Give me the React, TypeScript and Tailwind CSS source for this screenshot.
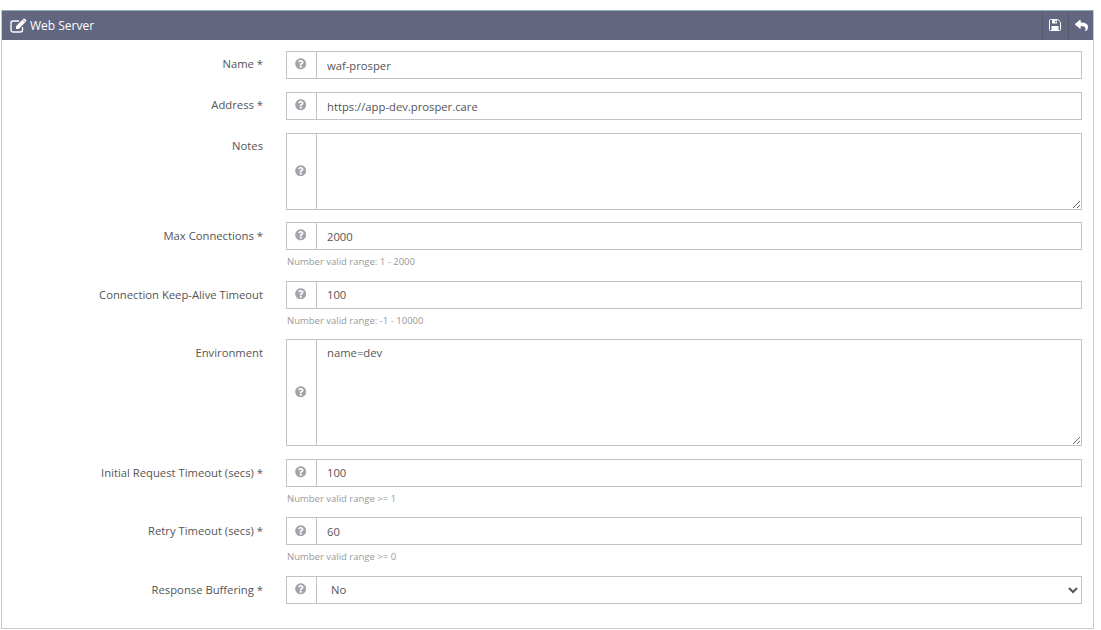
import type { ReactNode } from 'react';
import { FaQuestionCircle, FaReply } from 'react-icons/fa';

interface RowProps {
  label: string;
  help?: string;
  tight?: boolean;
  children: ReactNode;
}

function EditIcon() {
  return (
    <svg width="17" height="15" viewBox="0 0 17 15" fill="none">
      <path d="M12.5 9v3a2 2 0 0 1-2 2H3a2 2 0 0 1-2-2V5a2 2 0 0 1 2-2h6" stroke="currentColor" strokeWidth="1.4" />
      <path d="M6 8.2 12.6 1.6l2.7 2.7-6.6 6.6H6z" fill="currentColor" />
      <path d="M13.4.8c.4-.4 1-.4 1.4 0l1.3 1.3c.4.4.4 1 0 1.4l-.5.5-2.7-2.7z" fill="currentColor" />
    </svg>
  );
}

function SaveIcon() {
  return (
    <svg width="12" height="12" viewBox="0 0 12 12" fill="none">
      <path d="M.5 1.5a1 1 0 0 1 1-1h7.3l2.7 2.7v7.3a1 1 0 0 1-1 1h-9a1 1 0 0 1-1-1z" stroke="currentColor" />
      <path d="M3 1h5v3.5H3z" fill="currentColor" />
      <path d="M6.3 1.5h1v2h-1z" fill="#62667f" />
      <path d="M2.5 7h7v4h-7z" fill="currentColor" />
    </svg>
  );
}

function Row({ label, help, tight, children }: RowProps) {
  return (
    <div className="flex">
      <label className={`w-[261px] shrink-0 ${tight ? 'pt-[5px]' : 'pt-[6px]'} text-right text-[11.25px] leading-[16px] text-[#555]`}>
        {label}
      </label>
      <div className="ml-[23px] w-[796px]">
        <div className="flex">
          <span className="flex w-[30px] shrink-0 items-center justify-center border border-r-0 border-[#c2c2c8] pr-[2px] pb-[2px] text-[#a3a3ab]">
            <FaQuestionCircle size={11.5} />
          </span>
          {children}
        </div>
        {help && <p className="mt-[5px] h-[13px] pl-px text-[9.5px] leading-[13px] text-[#999]">{help}</p>}
      </div>
    </div>
  );
}

const inputClass = 'h-[28px] w-full border border-[#c2c2c8] bg-white px-[10px] text-[11.25px] text-[#555] outline-none';

export default function App() {
  return (
    <div className="h-[630px] w-[1101px] overflow-hidden bg-white pt-[10px] pl-px font-['Open_Sans',sans-serif]">
      <div className="h-[619px] w-[1093px] border-r border-b border-l border-[#c9c9cf]">
        <div className="flex h-[29.5px] items-center justify-between border-t border-[#8fb0b5] bg-[#62667f] text-white">
          <div className="flex items-center pl-2 text-[12px]">
            <EditIcon />
            <span className="ml-[3px] pt-[1px]">Web Server</span>
          </div>
          <div className="flex h-full">
            <span className="flex w-[26px] items-center justify-center border-l border-[#575b72] pr-[2px]">
              <SaveIcon />
            </span>
            <span className="flex w-[25px] items-center justify-center border-l border-[#575b72]">
              <FaReply size={13} />
            </span>
          </div>
        </div>
        <div className="flex flex-col gap-[13px] pt-[11.5px]">
          <Row label="Name *" tight>
            <input className={inputClass} defaultValue="waf-prosper" readOnly />
          </Row>
          <Row label="Address *" tight>
            <input className={inputClass} defaultValue="https://app-dev.prosper.care" readOnly />
          </Row>
          <Row label="Notes" tight>
            <textarea className={`${inputClass} !h-[77px] py-[5px]`} readOnly />
          </Row>
          <div className="-mt-px flex flex-col gap-[12.6px]">
            <Row label="Max Connections *" help="Number valid range: 1 - 2000">
              <input className={inputClass} defaultValue="2000" readOnly />
            </Row>
            <Row label="Connection Keep-Alive Timeout" help="Number valid range: -1 - 10000">
              <input className={inputClass} defaultValue="100" readOnly />
            </Row>
            <Row label="Environment">
              <textarea className={`${inputClass} !h-[107px] py-[5px]`} defaultValue="name=dev" readOnly />
            </Row>
            <Row label="Initial Request Timeout (secs) *" help="Number valid range >= 1">
              <input className={inputClass} defaultValue="100" readOnly />
            </Row>
            <Row label="Retry Timeout (secs) *" help="Number valid range >= 0">
              <input className={inputClass} defaultValue="60" readOnly />
            </Row>
            <Row label="Response Buffering *">
              <select className={inputClass} defaultValue="No">
                <option>No</option>
                <option>Yes</option>
              </select>
            </Row>
          </div>
        </div>
      </div>
    </div>
  );
}
